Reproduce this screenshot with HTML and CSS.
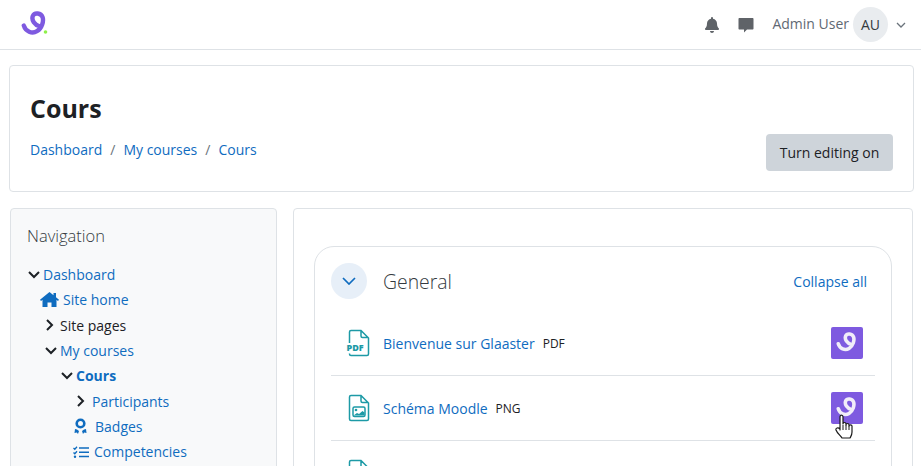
FILE: index.html
```html
<!DOCTYPE html>
<html lang="en">
<head>
  <meta charset="UTF-8" />
  <meta name="viewport" content="width=device-width, initial-scale=1.0" />
  <title>Cours</title>
  <link rel="stylesheet" href="styles.css">
</head>
<body>
  <nav class="navbar">
    <svg class="logo" width="28" height="28" viewBox="0 0 28 28">
      <path d="M3.800 14.500C5.500 20.500 12 23.200 17 20.200C22 17.200 24 10 22.500 6C21 2 14.500 1 12.800 5C11.300 9 14.500 14 20 15.500" fill="none" stroke="#7e5ae0" stroke-width="4.400" stroke-linecap="round"/>
      <circle cx="25.500" cy="21" r="1.800" fill="#8ef04a"/>
    </svg>
    <div class="nav-right">
      <svg class="nav-icon" width="14" height="16" viewBox="0 0 448 512"><path fill="#5f6368" d="M224 512c35 0 64-29 64-64H160c0 35 29 64 64 64zm215-150c-19-21-55-52-55-154 0-78-54-140-128-155V32a32 32 0 1 0-64 0v21C118 68 64 130 64 208c0 102-36 133-55 154-6 6-9 14-9 22 0 16 13 32 32 32h384c19 0 32-16 32-32 0-8-3-16-9-22z"/></svg>
      <svg class="nav-icon msg" width="16" height="16" viewBox="0 0 16 16"><path fill="#5f6368" d="M1.500 1h13c.6 0 1 .4 1 1v9.500c0 .6-.4 1-1 1H9l-3 3v-3H1.500c-.6 0-1-.4-1-1V2c0-.6.4-1 1-1z"/></svg>
      <span class="user-name">Admin User</span>
      <span class="avatar">AU</span>
      <svg class="caret" width="10" height="6" viewBox="0 0 10 6"><path d="M1 1l4 4 4-4" fill="none" stroke="#6a737b" stroke-width="1.300"/></svg>
    </div>
  </nav>

  <div class="page">
    <header class="page-header">
      <div>
        <h1>Cours</h1>
        <div class="breadcrumb">
          <a href="#">Dashboard</a><span class="sep">/</span><a href="#">My courses</a><span class="sep">/</span><a href="#">Cours</a>
        </div>
      </div>
      <button class="edit-btn">Turn editing on</button>
    </header>

    <div class="columns">
      <aside class="nav-block">
        <h5>Navigation</h5>
        <ul class="tree">
          <li class="level0"><svg class="arrow" width="12" height="8" viewBox="0 0 12 8"><path d="M1 1l5 5 5-5" /></svg><a href="#">Dashboard</a></li>
          <li class="level1"><svg class="tree-icon home" width="19" height="15" viewBox="0 0 19 15"><path fill="#0f6cbf" d="M9.500 0L0 7.800l1 1.100 1.500-1.100V15h5v-4.500h4V15h5V7.800l1.500 1.100 1-1.100-3-2.500V1h-2.500v2.200z"/></svg><a href="#">Site home</a></li>
          <li class="level2"><svg class="arrow side" width="8" height="12" viewBox="0 0 8 12"><path d="M1 1l5 5-5 5" /></svg><span>Site pages</span></li>
          <li class="level2b"><svg class="arrow" width="12" height="8" viewBox="0 0 12 8"><path d="M1 1l5 5 5-5" /></svg><a href="#">My courses</a></li>
          <li class="level3"><svg class="arrow" width="12" height="8" viewBox="0 0 12 8"><path d="M1 1l5 5 5-5" /></svg><a href="#" class="current">Cours</a></li>
          <li class="level4"><svg class="arrow side" width="8" height="12" viewBox="0 0 8 12"><path d="M1 1l5 5-5 5" /></svg><a href="#">Participants</a></li>
          <li class="level5"><svg class="tree-icon" width="13" height="16" viewBox="0 0 13 16"><circle cx="6.500" cy="5.500" r="3.800" fill="none" stroke="#0f6cbf" stroke-width="2.600"/><path fill="#0f6cbf" d="M1 11l2 .5 2 1.500-1 3-1.200-1.500L.5 15zM12 11l-2 .5-2 1.500 1 3 1.200-1.500 2.300.5z"/></svg><a href="#">Badges</a></li>
          <li class="level5c"><svg class="tree-icon" width="16" height="12" viewBox="0 0 16 12"><path d="M.5 2l1.300 1.300L4 .8" fill="none" stroke="#0f6cbf" stroke-width="1.300"/><path d="M.5 6.500l1.300 1.300L4 5.300" fill="none" stroke="#0f6cbf" stroke-width="1.300"/><circle cx="2" cy="10.800" r="1.200" fill="#0f6cbf"/><path d="M6 2h10M6 6.200h10M6 10.500h10" stroke="#0f6cbf" stroke-width="1.500"/></svg><a href="#">Competencies</a></li>
        </ul>
      </aside>

      <main class="main-card">
        <section class="course-section">
          <div class="section-head">
            <span class="collapse-btn"><svg width="14" height="8" viewBox="0 0 14 8"><path d="M1 1l6 6 6-6" fill="none" stroke="#0f6cbf" stroke-width="1.700"/></svg></span>
            <h3>General</h3>
            <a href="#" class="collapse-all">Collapse all</a>
          </div>
          <div class="activity">
            <svg class="file-icon" width="24" height="28" viewBox="0 0 24 28"><path d="M4.500 14V3c0-1 .6-1.500 1.500-1.500h10L23.500 9v16c0 1-.6 1.500-1.500 1.500H6c-.9 0-1.500-.5-1.500-1.500v-.5M16 1.500V7c0 1 .6 1.500 1.500 1.500h6" fill="none" stroke="#1d9aa6" stroke-width="1.500"/><text x="1.500" y="22" class="pdf-mark">PDF</text></svg>
            <a href="#" class="activity-name">Bienvenue sur Glaaster</a>
            <span class="file-type">PDF</span>
            <span class="plugin-btn"><svg width="22" height="22" viewBox="1 0 27 27"><path d="M3.800 14.500C5.500 20.500 12 23.200 17 20.200C22 17.200 24 10 22.500 6C21 2 14.500 1 12.800 5C11.300 9 14.500 14 20 15.500" fill="none" stroke="#f1edf9" stroke-width="4.400" stroke-linecap="round"/></svg></span>
          </div>
          <div class="activity">
            <svg class="file-icon" width="24" height="28" viewBox="0 0 24 28"><path d="M16 1.500H6c-.9 0-1.500.5-1.500 1.500v22c0 1 .6 1.500 1.500 1.500h16c.9 0 1.500-.5 1.500-1.500V9zM16 1.500V7c0 1 .6 1.500 1.500 1.500h6" fill="none" stroke="#1d9aa6" stroke-width="1.500"/><rect x="8" y="13" width="12" height="9.500" rx="1.500" fill="none" stroke="#1d9aa6" stroke-width="1.500"/><circle cx="11" cy="16" r="1.300" fill="#1d9aa6"/><path d="M8.500 21.500l3.500-2.500 2 1 3.500-3 2 1.500v3z" fill="#1d9aa6"/></svg>
            <a href="#" class="activity-name">Schéma Moodle</a>
            <span class="file-type">PNG</span>
            <span class="plugin-btn"><svg width="22" height="22" viewBox="1 0 27 27"><path d="M3.800 14.500C5.500 20.500 12 23.200 17 20.200C22 17.200 24 10 22.500 6C21 2 14.500 1 12.800 5C11.300 9 14.500 14 20 15.500" fill="none" stroke="#f1edf9" stroke-width="4.400" stroke-linecap="round"/></svg></span>
          </div>
          <div class="activity">
            <svg class="file-icon" width="24" height="28" viewBox="0 0 24 28"><path d="M16 1.500H6c-.9 0-1.500.5-1.500 1.500v22c0 1 .6 1.500 1.500 1.500h16c.9 0 1.500-.5 1.500-1.500V9zM16 1.500V7c0 1 .6 1.500 1.500 1.500h6" fill="none" stroke="#1d9aa6" stroke-width="1.500"/></svg>
          </div>
        </section>
      </main>
    </div>
  </div>

  <svg class="hand-cursor" width="19" height="26" viewBox="0 0 19 26"><path d="M5 16V3c0-2.600 3-2.600 3 0v7c0-2 3-2 3 0v1c0-2 3-2 3 0v1c0-1.500 3-1.500 3 0v6c0 3-1 4-2 6H7c-1-2-5-5-6-8-.5-2 2-3 4-1z" fill="#fff" stroke="#1a1a1a" stroke-width="1.200" stroke-linejoin="round"/><path d="M8 11v5M11 11v5M14 12v4" stroke="#1a1a1a" stroke-width="1"/></svg>
</body>
</html>
```

FILE: styles.css
```css
html, body {
  height: 466px;
  overflow: hidden;
}
body {
  font-family: "Open Sans", "Noto Sans", sans-serif;
  font-size: 14px;
  margin: 0;
  padding: 0;
  background: #fff;
  color: #1d2125;
}
a {
  color: #0f6cbf;
  text-decoration: none;
}

.navbar {
  display: flex;
  align-items: center;
  justify-content: space-between;
  height: 49px;
  border-bottom: 1px solid #dee2e6;
  padding: 0 20px;
}
.logo {
  display: block;
}
.nav-right {
  display: flex;
  align-items: center;
}
.nav-icon {
  margin-right: 19px;
}
.msg {
  margin-right: 18px;
}
.user-name {
  color: #5f6973;
  margin-top: -3px;
  margin-right: 4px;
}
.avatar {
  display: flex;
  align-items: center;
  justify-content: center;
  width: 35px;
  height: 35px;
  border-radius: 50%;
  background: #e9ecef;
  color: #343a40;
}
.caret {
  margin-left: 8px;
  margin-right: -5px;
}

.page {
  padding: 15px 7px 0 9px;
}
.page-header {
  display: flex;
  justify-content: space-between;
  align-items: flex-end;
  box-sizing: border-box;
  height: 127px;
  border: 1px solid #dee2e6;
  border-radius: 4px;
  padding: 0 20px 20px 20px;
  margin-bottom: 16px;
}
h1 {
  font-size: 25px;
  font-weight: 700;
  line-height: 34px;
  margin: 0 0 15px;
  color: #1d2125;
}
.breadcrumb {
  line-height: 20px;
  margin-bottom: 11px;
}
.sep {
  color: #6a737b;
  margin: 0 8px;
}
.edit-btn {
  font: inherit;
  width: 127px;
  height: 37px;
  border: 0;
  border-radius: 4px;
  background: #ced4da;
  color: #1d2125;
}

.columns {
  display: flex;
  gap: 16px;
  align-items: flex-start;
  margin-right: 1px;
}
.nav-block {
  width: 267px;
  height: 300px;
  margin-left: 1px;
  box-sizing: border-box;
  background: #f8f9fa;
  border: 1px solid #dee2e6;
  border-radius: 4px;
  padding: 16px;
  flex: none;
}
h5 {
  font-size: 16.500px;
  font-weight: 300;
  line-height: 22px;
  margin: 0 0 15px;
  color: #343a40;
}
.tree {
  list-style: none;
  margin: 0;
  padding: 0;
}
.tree li {
  display: flex;
  align-items: center;
  height: 25.300px;
}
.arrow path {
  fill: none;
  stroke: #1d2125;
  stroke-width: 2;
}
.arrow {
  margin-right: 3px;
}
.arrow.side {
  margin-right: 6px;
}
.tree-icon {
  margin-right: 4px;
}
.level0 { padding-left: 1px; }
.level1 { padding-left: 13px; }
.level2 { padding-left: 19px; }
.level2b { padding-left: 18px; }
.level3 { padding-left: 34px; }
.level4 { padding-left: 50px; }
.level4 .arrow { margin-right: 7px; }
.level5 { padding-left: 47px; }
.level5 .tree-icon { margin-right: 8px; }
.level5c { padding-left: 46px; }
.level5c .tree-icon { margin-right: 5px; }
.current {
  font-weight: 700;
}

.main-card {
  flex: 1;
  height: 300px;
  box-sizing: border-box;
  border: 1px solid #dee2e6;
  border-radius: 4px;
  padding: 37px 20px 0;
}
.course-section {
  border: 1px solid #dee2e6;
  border-radius: 20px;
  padding: 16px;
  height: 300px;
  box-sizing: border-box;
}
.section-head {
  display: flex;
  align-items: center;
  height: 36px;
  margin-bottom: 12px;
}
.collapse-btn {
  display: flex;
  align-items: center;
  justify-content: center;
  width: 36px;
  height: 36px;
  border-radius: 50%;
  background: #e7eff8;
}
h3 {
  font-size: 19.400px;
  font-weight: 300;
  margin: 0 0 0 16px;
  color: #343a40;
}
.collapse-all {
  margin-left: auto;
  margin-right: 8px;
}
.activity {
  display: flex;
  align-items: center;
  height: 64px;
  border-bottom: 1px solid #dee2e6;
  padding: 0 12px 0 14px;
}
.file-icon {
  margin-right: 14px;
  overflow: visible;
}
.pdf-mark {
  font-size: 9px;
  font-weight: 800;
  fill: #1d9aa6;
}
.activity-name {
  margin-right: 8px;
}
.file-type {
  font-size: 12px;
}
.plugin-btn {
  display: flex;
  align-items: center;
  justify-content: center;
  margin-left: auto;
  width: 32px;
  height: 32px;
  border-radius: 2px;
  background: #7e5ae0;
}

.hand-cursor {
  position: absolute;
  left: 835px;
  top: 414px;
}
```
